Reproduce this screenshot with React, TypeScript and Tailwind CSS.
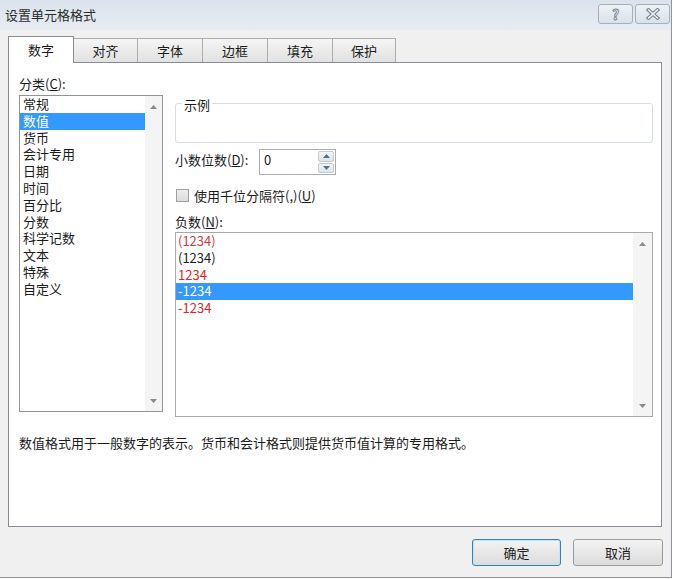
import React from "react";

const tabs = [
  { label: "数字", w: "w-[66px]" },
  { label: "对齐", w: "w-[64px]" },
  { label: "字体", w: "w-[65px]" },
  { label: "边框", w: "w-[65px]" },
  { label: "填充", w: "w-[65px]" },
  { label: "保护", w: "w-[63px]" },
];

const categories = ["常规", "数值", "货币", "会计专用", "日期", "时间", "百分比", "分数", "科学记数", "文本", "特殊", "自定义"];

const negatives = [
  { text: "(1234)", color: "text-[#d4383b]" },
  { text: "(1234)", color: "text-[#1b1b1b]" },
  { text: "1234", color: "text-[#e0232b]" },
  { text: "-1234", color: "text-white", selected: true },
  { text: "-1234", color: "text-[#e0232b]" },
];

function Arrow({ down, color = "#8a8a8a" }: { down?: boolean; color?: string }) {
  return (
    <svg width="7" height="4" viewBox="0 0 7 4">
      <path d={down ? "M0 0 H7 L3.5 4 Z" : "M0 4 H7 L3.5 0 Z"} fill={color} />
    </svg>
  );
}

function Scrollbar({ w }: { w: string }) {
  return (
    <div className={`${w} h-full bg-[#f4f4f4] flex flex-col items-center justify-between pt-[9px] pb-[8px]`}>
      <Arrow />
      <Arrow down />
    </div>
  );
}

function TitleBar() {
  return (
    <div className="h-[30px] flex items-start bg-linear-to-b from-[#dae3ed] to-[#e7ecf1]">
      <div className="pl-[5px] leading-[30px] text-[13px] text-[#2b2b2b]">设置单元格格式</div>
      <div className="ml-auto mt-[4px] mr-[1px] flex gap-[2px]">
        <div className="w-[35px] h-[20px] rounded-[3px] border border-[#a3b0c0] bg-linear-to-b from-[#eef2f6] to-[#d9e1ea] flex items-center justify-center text-[14px] font-bold text-[#e9eef3] [-webkit-text-stroke:0.8px_#6d7c8e] leading-none">
          ?
        </div>
        <div className="w-[35px] h-[20px] rounded-[3px] border border-[#a3b0c0] bg-linear-to-b from-[#eef2f6] to-[#d9e1ea] flex items-center justify-center">
          <svg width="14" height="12" viewBox="0 0 14 12">
            <path d="M2.5 2 L11.5 10 M11.5 2 L2.5 10" stroke="#6d7c8e" strokeWidth="3.6" strokeLinecap="square" />
            <path d="M2.5 2 L11.5 10 M11.5 2 L2.5 10" stroke="#eef2f6" strokeWidth="1.6" strokeLinecap="square" />
          </svg>
        </div>
      </div>
    </div>
  );
}

function Tabs() {
  return (
    <div className="mt-[6px] h-[26px] flex items-end pl-[8px]">
      {tabs.map((t, i) =>
        i === 0 ? (
          <div
            key={t.label}
            className={`${t.w} h-[27px] -mb-px relative z-10 bg-white border-t border-l border-r border-[#898c95] flex items-center justify-center pb-[1px]`}
          >
            {t.label}
          </div>
        ) : (
          <div
            key={t.label}
            className={`${t.w} h-[24px] border-t border-r border-[#acacac] bg-linear-to-b from-[#f5f5f5] to-[#e1e1e1] flex items-center justify-center`}
          >
            {t.label}
          </div>
        )
      )}
    </div>
  );
}

function Panel() {
  return (
    <div className="ml-[8px] w-[654px] h-[465px] bg-white border border-[#898c95] flex flex-col">
      <div className="flex">
        {/* Category column */}
        <div className="pl-[10px] flex flex-col">
          <div className="mt-[12px] h-[17px] leading-[17px]">
            分类(<span className="underline">C</span>):
          </div>
          <div className="mt-[3px] w-[144px] h-[317px] border border-[#939393] flex">
            <div className="flex-1 flex flex-col">
              {categories.map((c, i) => (
                <div
                  key={c}
                  className={`h-[16.8px] leading-[16.8px] pl-[3px] ${i === 1 ? "bg-[#3399ff] text-white" : ""}`}
                >
                  {c}
                </div>
              ))}
            </div>
            <Scrollbar w="w-[17px]" />
          </div>
        </div>

        {/* Right column */}
        <div className="ml-[12px] w-[478px] flex flex-col">
          <div className="mt-[40px] h-[40px] relative border border-[#d5dde5] rounded-[3px]">
            <span className="absolute -top-[8px] left-[6px] px-[2px] bg-white leading-[17px]">示例</span>
          </div>

          <div className="mt-[6px] h-[26px] flex items-center">
            <div className="w-[84px] leading-[17px] -mt-[5px]">
              小数位数(<span className="underline">D</span>):
            </div>
            <div className="w-[77px] h-[26px] border border-[#abadb3] flex">
              <div className="flex-1 pl-[4px] leading-[20px]">0</div>
              <div className="w-[18px] flex flex-col gap-[1px] p-[1px]">
                <div className="flex-1 border border-[#c5cbd3] rounded-[2px] bg-linear-to-b from-[#f4f6f8] to-[#dfe4ea] flex items-center justify-center">
                  <Arrow color="#5a6f8f" />
                </div>
                <div className="flex-1 border border-[#c5cbd3] rounded-[2px] bg-linear-to-b from-[#f4f6f8] to-[#dfe4ea] flex items-center justify-center">
                  <Arrow down color="#5a6f8f" />
                </div>
              </div>
            </div>
          </div>

          <div className="mt-[12px] h-[17px] flex items-center">
            <div className="w-[13px] h-[13px] ml-[1px] border border-[#a0a0a0] bg-linear-to-b from-[#ececec] to-[#dcdcdc]" />
            <div className="ml-[5px] leading-[17px]">
              使用千位分隔符(,)(<span className="underline">U</span>)
            </div>
          </div>

          <div className="mt-[9px] h-[17px] leading-[17px]">
            负数(<span className="underline">N</span>):
          </div>
          <div className="mt-[2px] h-[185px] border border-[#a9a9a9] flex">
            <div className="flex-1 flex flex-col">
              {negatives.map((n, i) => (
                <div
                  key={i}
                  className={`h-[16.8px] leading-[16.8px] pl-[2px] ${n.color} ${n.selected ? "bg-[#3399ff]" : ""}`}
                >
                  {n.text}
                </div>
              ))}
            </div>
            <Scrollbar w="w-[19px]" />
          </div>
        </div>
      </div>

      <p className="mt-[17px] pl-[10px] leading-[17px]">
        数值格式用于一般数字的表示。货币和会计格式则提供货币值计算的专用格式。
      </p>
    </div>
  );
}

function Buttons() {
  return (
    <div className="mt-[12px] flex justify-end gap-[12px] pr-[8px]">
      <button className="w-[89px] h-[27px] rounded-[3px] border border-[#3c7fb1] shadow-[inset_0_0_0_1px_#bfe3f7] bg-linear-to-b from-[#f3f3f3] to-[#dcdcdc]">
        确定
      </button>
      <button className="w-[90px] h-[27px] rounded-[3px] border border-[#9a9a9a] bg-linear-to-b from-[#f3f3f3] to-[#dcdcdc]">
        取消
      </button>
    </div>
  );
}

export default function App() {
  return (
    <div className="w-[674px] h-[579px] bg-white font-['Noto_Sans_CJK_SC','Noto_Sans',sans-serif] text-[13px] text-[#1b1b1b]">
      <div className="w-[672px] h-[578px] bg-[#f0f0f0] border-r border-b border-[#8f959c] flex flex-col">
        <TitleBar />
        <Tabs />
        <Panel />
        <Buttons />
      </div>
    </div>
  );
}
